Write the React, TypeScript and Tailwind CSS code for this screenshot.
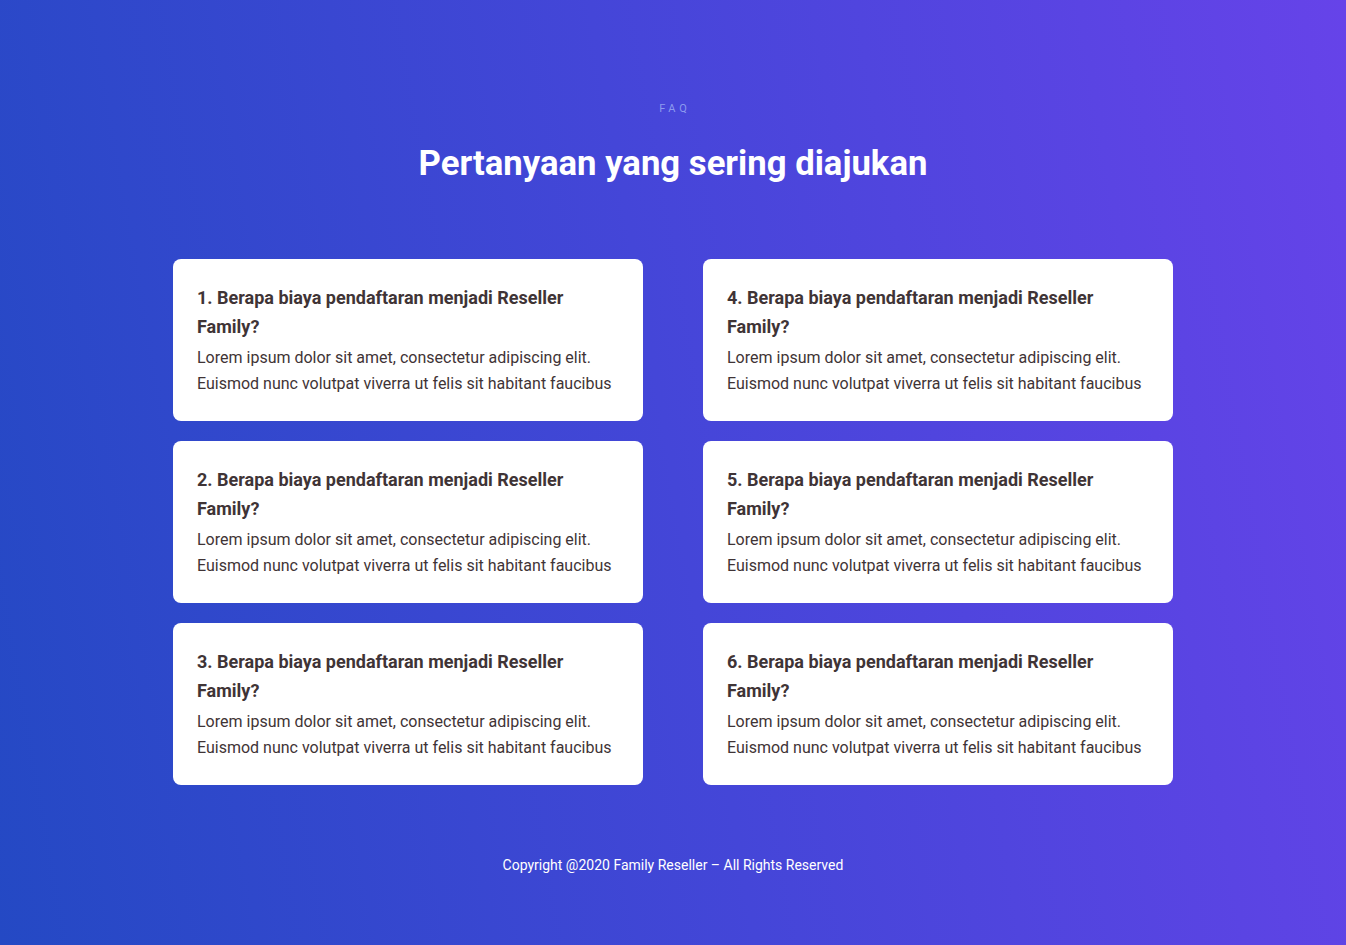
// FAQ reseller — grille de questions sur fond dégradé

const faqs = [1, 2, 3, 4, 5, 6].map((n) => ({
  id: n,
  question: `${n}. Berapa biaya pendaftaran menjadi Reseller Family?`,
  answer:
    'Lorem ipsum dolor sit amet, consectetur adipiscing elit. Euismod nunc volutpat viverra ut felis sit habitant faucibus',
}))

function FaqCard({ question, answer }: { question: string; answer: string }) {
  return (
    <div className="bg-white rounded-lg p-6">
      <h3 className="text-[18px] leading-[29px] font-bold text-[#3f3436] pr-6">{question}</h3>
      <p className="mt-1 text-[16px] leading-[26px] text-[#3f3436]">{answer}</p>
    </div>
  )
}

export default function App() {
  // colonnes : 1-3 à gauche, 4-6 à droite
  const left = faqs.slice(0, 3)
  const right = faqs.slice(3)

  return (
    <div
      className="min-h-[945px] w-full flex flex-col items-center bg-[linear-gradient(80deg,#2449c4_0%,#4446d8_50%,#6643e9_100%)]"
      style={{ fontFamily: 'Roboto, "Liberation Sans", sans-serif' }}
    >
      <div className="pt-[101px] text-[11px] leading-[16px] tracking-[0.35em] text-[#9fb0f5] opacity-80 pl-[0.35em]">
        FAQ
      </div>
      <h1 className="mt-[25px] text-[34.7px] leading-[42px] font-bold text-white">
        Pertanyaan yang sering diajukan
      </h1>

      <div className="mt-[75px] w-[1000px] grid grid-cols-2 gap-x-[60px]">
        <div className="flex flex-col gap-5">
          {left.map((f) => (
            <FaqCard key={f.id} question={f.question} answer={f.answer} />
          ))}
        </div>
        <div className="flex flex-col gap-5">
          {right.map((f) => (
            <FaqCard key={f.id} question={f.question} answer={f.answer} />
          ))}
        </div>
      </div>

      <footer className="mt-[70px] text-[14px] leading-[20px] text-white">
        Copyright @2020 Family Reseller – All Rights Reserved
      </footer>
    </div>
  )
}
